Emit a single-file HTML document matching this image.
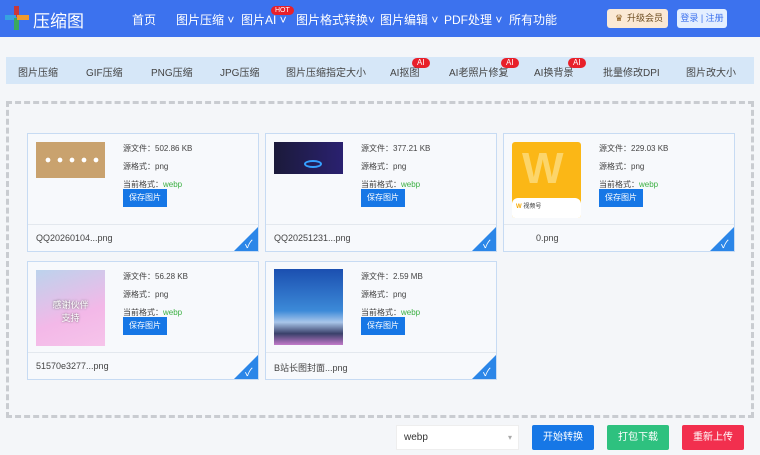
<!DOCTYPE html>
<html><head><meta charset="utf-8"><style>
*{margin:0;padding:0;box-sizing:border-box}
body{width:760px;height:455px;overflow:hidden;background:#f4f6f9;font-family:"Liberation Sans","Noto Sans CJK SC",sans-serif;position:relative;color:#333}
.a{position:absolute}
.hdr{left:0;top:0;width:760px;height:37px;background:#3c72ee}
.nav{color:#fff;font-size:12px;top:11px}
.sub{left:6px;top:57px;width:748px;height:27px;background:#d6e7f8}
.sub span{position:absolute;top:7px;font-size:10px;color:#444}
.ai{position:absolute;background:#e8202a;color:#fff;font-size:8px;border-radius:6px;padding:0 5px;line-height:10px;top:-6px;font-style:normal}
.box{left:6px;top:101px;width:748px;height:317px;border:3px dashed #c9ccd1}
.card{position:absolute;width:232px;height:119px;background:#f7f9fc;border:1px solid #c7dbf3}
.card .ft{position:absolute;left:0;top:90px;width:100%;height:1px;background:#e3e8ee}
.card .fn{position:absolute;left:8px;top:99px;font-size:9px;color:#444}
.card .t{position:absolute;left:95px;font-size:8px;color:#444}
.card .g{color:#3cb043}
.card .b{position:absolute;left:95px;top:55px;width:44px;height:18px;background:#1677e6;color:#fff;font-size:8px;text-align:center;line-height:18px}
.chk{position:absolute;right:0;bottom:0;width:0;height:0;border-left:24px solid transparent;border-bottom:24px solid #2b86e8}
.chk:after{content:"✓";position:absolute;color:#fff;font-size:11px;left:-13px;top:9px}
.th{position:absolute;left:8px}
.btn{position:absolute;top:425px;width:62px;height:25px;color:#fff;font-size:10px;text-align:center;line-height:25px;border-radius:2px}
</style></head><body>
<div class="a hdr"></div>
<svg class="a" style="left:5px;top:6px" width="24" height="24" viewBox="0 0 24 24"><rect x="9" y="0" width="5" height="11" fill="#c8383c"/><rect x="0" y="9" width="11" height="5" fill="#36a3e0"/><rect x="9" y="12" width="5" height="12" fill="#3aa860"/><rect x="12" y="9" width="12" height="5" fill="#f09a2c"/></svg>
<div class="a" style="left:33px;top:7px;color:#fff;font-size:17px">压缩图</div>
<div class="a nav" style="left:132px">首页</div>
<div class="a nav" style="left:176px">图片压缩 ˅</div>
<div class="a nav" style="left:241px">图片AI ˅</div>
<div class="a" style="left:271px;top:6px;background:#e8202a;color:#fff;font-size:7px;border-radius:6px;padding:0 4px;line-height:9px">HOT</div>
<div class="a nav" style="left:296px">图片格式转换˅</div>
<div class="a nav" style="left:380px">图片编辑 ˅</div>
<div class="a nav" style="left:444px">PDF处理 ˅</div>
<div class="a nav" style="left:509px">所有功能</div>
<div class="a" style="left:607px;top:9px;width:61px;height:19px;background:#fbe9d5;border-radius:3px;font-size:9px;color:#6b4b1e;line-height:19px;padding-left:20px">升级会员<span style="position:absolute;left:8px;color:#8a5a1a">♛</span></div>
<div class="a" style="left:677px;top:9px;width:50px;height:19px;background:#e4efff;border-radius:3px;font-size:9px;color:#3c72ee;line-height:19px;text-align:center">登录 | 注册</div>
<div class="a sub">
<span style="left:12px">图片压缩</span><span style="left:80px">GIF压缩</span><span style="left:145px">PNG压缩</span><span style="left:214px">JPG压缩</span><span style="left:280px">图片压缩指定大小</span>
<span style="left:384px">AI抠图<i class="ai" style="left:22px">AI</i></span>
<span style="left:443px">AI老照片修复<i class="ai" style="left:52px">AI</i></span>
<span style="left:528px">AI换背景<i class="ai" style="left:34px">AI</i></span>
<span style="left:597px">批量修改DPI</span><span style="left:680px">图片改大小</span>
</div>
<div class="a box"></div>

<div class="card" style="left:27px;top:133px">
<div class="th" style="top:8px;width:69px;height:36px;background:#c9a26e"><div style="margin:14px 6px 0;height:8px;background:radial-gradient(circle,#fff 30%,transparent 35%) 0 0/12px 8px"></div></div>
<div class="t" style="top:9px">源文件：502.86 KB</div><div class="t" style="top:27px">源格式：png</div><div class="t" style="top:45px">当前格式：<span class="g">webp</span></div>
<div class="b">保存图片</div><div class="ft"></div><div class="fn">QQ20260104...png</div><div class="chk"></div></div>

<div class="card" style="left:265px;top:133px">
<div class="th" style="top:8px;width:69px;height:32px;background:linear-gradient(90deg,#1b1a3a,#2a2170);"><div style="position:absolute;left:30px;top:18px;width:18px;height:8px;border:2px solid #35a0ff;border-radius:50%"></div></div>
<div class="t" style="top:9px">源文件：377.21 KB</div><div class="t" style="top:27px">源格式：png</div><div class="t" style="top:45px">当前格式：<span class="g">webp</span></div>
<div class="b">保存图片</div><div class="ft"></div><div class="fn">QQ20251231...png</div><div class="chk"></div></div>

<div class="card" style="left:503px;top:133px">
<div class="th" style="top:8px;width:69px;height:76px;background:#fbb716;border-radius:3px;overflow:hidden"><div style="position:absolute;left:10px;top:2px;font-size:44px;color:#fcd56a;font-weight:bold">W</div><div style="position:absolute;left:0;top:56px;width:69px;height:20px;background:#fff;border-radius:6px 6px 0 0;font-size:6px;padding:3px 4px;color:#333"><b style="color:#f6a800">W</b> 视频号</div></div>
<div class="t" style="top:9px">源文件：229.03 KB</div><div class="t" style="top:27px">源格式：png</div><div class="t" style="top:45px">当前格式：<span class="g">webp</span></div>
<div class="b">保存图片</div><div class="ft"></div><div class="fn" style="left:32px">0.png</div><div class="chk"></div></div>

<div class="card" style="left:27px;top:261px">
<div class="th" style="top:8px;width:69px;height:76px;background:linear-gradient(160deg,#bcd3ec,#f3b8e8 60%,#f6c4ea);color:#fff;font-size:9px;text-align:center;padding-top:28px;text-shadow:0 0 2px #555">感谢伙伴<br>支持</div>
<div class="t" style="top:9px">源文件：56.28 KB</div><div class="t" style="top:27px">源格式：png</div><div class="t" style="top:45px">当前格式：<span class="g">webp</span></div>
<div class="b">保存图片</div><div class="ft"></div><div class="fn">51570e3277...png</div><div class="chk"></div></div>

<div class="card" style="left:265px;top:261px">
<div class="th" style="top:7px;width:69px;height:76px;background:linear-gradient(180deg,#1b4fb0,#3c8ad8 55%,#a9c6ea 70%,#39406a 85%,#c27ac9)"></div>
<div class="t" style="top:9px">源文件：2.59 MB</div><div class="t" style="top:27px">源格式：png</div><div class="t" style="top:45px">当前格式：<span class="g">webp</span></div>
<div class="b">保存图片</div><div class="ft"></div><div class="fn">B站长图封面...png</div><div class="chk"></div></div>

<div class="a" style="left:396px;top:425px;width:123px;height:25px;background:#fff;border:1px solid #eee;font-size:10px;line-height:24px;padding-left:7px">webp<span style="position:absolute;right:6px;color:#aaa;font-size:8px">▾</span></div>
<div class="btn" style="left:532px;background:#1677e6">开始转换</div>
<div class="btn" style="left:607px;background:#2ec17f">打包下载</div>
<div class="btn" style="left:682px;background:#f22f4e">重新上传</div>
</body></html>
